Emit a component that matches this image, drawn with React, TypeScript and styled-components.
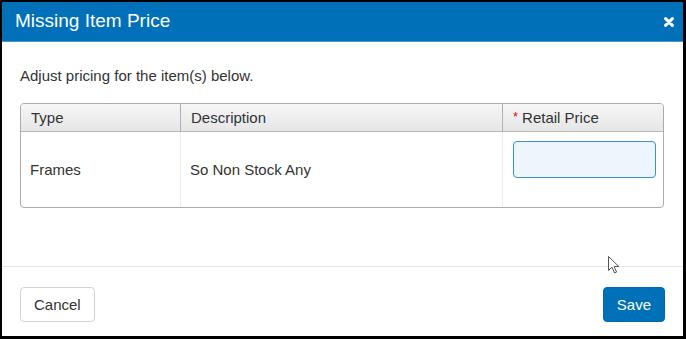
import styled, { createGlobalStyle } from "styled-components";

const GlobalStyle = createGlobalStyle`
  html, body {
    margin: 0;
    padding: 0;
    background: #000;
  }
  body {
    font-family: "Liberation Sans", Arial, sans-serif;
    color: #333;
  }
`;

const Frame = styled.div`
  width: 686px;
  height: 339px;
  box-sizing: border-box;
  padding: 2px 3px 3px 2px;
  background: #000;
`;

const Modal = styled.div`
  position: relative;
  height: 100%;
  background: #fff;
  display: flex;
  flex-direction: column;
`;

const Header = styled.div`
  height: 38px;
  background: #0070b8;
  border-bottom: 1px solid #4d98cf;
  display: flex;
  align-items: center;
  justify-content: space-between;
  padding: 0 9px 1px 13px;
`;

const Title = styled.h4`
  margin: 0;
  font-size: 19px;
  font-weight: normal;
  color: #fff;
`;

const Close = styled.button`
  border: 0;
  background: none;
  padding: 0;
  width: 10px;
  height: 10px;
  display: flex;
  cursor: pointer;
  margin-top: 1px;
`;

const Body = styled.div`
  flex: 1;
  padding: 24px 19px 0 18px;
`;

const Intro = styled.p`
  margin: 0 0 17px;
  font-size: 15px;
  line-height: 20px;
`;

const Grid = styled.div`
  display: grid;
  grid-template-columns: 160px 322px 1fr;
  border: 1px solid #ababab;
  border-radius: 4px;
  overflow: hidden;
`;

const HeadCell = styled.div<{ last?: boolean }>`
  height: 27px;
  display: flex;
  align-items: center;
  padding-left: 10px;
  font-size: 15px;
  background: linear-gradient(#f6f6f6, #e6e6e6);
  border-bottom: 1px solid #b8b8b8;
  border-right: ${(p) => (p.last ? "none" : "1px solid #b0b0b0")};
`;

const Cell = styled.div<{ last?: boolean }>`
  height: 75px;
  display: flex;
  align-items: ${(p) => (p.last ? "flex-start" : "center")};
  padding-left: 9px;
  font-size: 15px;
  border-right: ${(p) => (p.last ? "none" : "1px solid #ececec")};
`;

const Star = styled.span`
  color: #e01010;
  font-size: 13px;
  margin-right: 4px;
  position: relative;
  top: -1px;
`;

const PriceInput = styled.input`
  box-sizing: border-box;
  width: 143px;
  height: 37px;
  margin: 9px 0 0 1px;
  border: 1px solid #3d8fcf;
  border-radius: 4px;
  background: #edf5fd;
  outline: none;
  font-size: 15px;
`;

const Footer = styled.div`
  border-top: 1px solid #e5e5e5;
  padding: 20px 18px 14px 18px;
  display: flex;
  justify-content: space-between;
`;

const Button = styled.button<{ primary?: boolean }>`
  height: 35px;
  box-sizing: border-box;
  padding: 0 13px;
  font-family: "Liberation Sans", Arial, sans-serif;
  font-size: 15px;
  border-radius: 4px;
  border: 1px solid ${(p) => (p.primary ? "#0068ad" : "#d2d2d2")};
  background: ${(p) => (p.primary ? "#0070b8" : "#fff")};
  color: ${(p) => (p.primary ? "#fff" : "#333")};
  cursor: pointer;
`;

const Pointer = styled.svg`
  position: absolute;
  left: 606px;
  top: 254px;
`;

export default function App() {
  return (
    <>
      <GlobalStyle />
      <Frame>
        <Modal>
          <Header>
            <Title>Missing Item Price</Title>
            <Close aria-label="Close">
              <svg width="10" height="10" viewBox="0 0 10 10">
                <path d="M1.6 1.6L8.4 8.4M8.4 1.6L1.6 8.4" stroke="#fff" strokeWidth="3" strokeLinecap="round" />
              </svg>
            </Close>
          </Header>
          <Body>
            <Intro>Adjust pricing for the item(s) below.</Intro>
            <Grid>
              <HeadCell>Type</HeadCell>
              <HeadCell>Description</HeadCell>
              <HeadCell last>
                <Star>*</Star>Retail Price
              </HeadCell>
              <Cell>Frames</Cell>
              <Cell>So Non Stock Any</Cell>
              <Cell last>
                <PriceInput />
              </Cell>
            </Grid>
          </Body>
          <Footer>
            <Button>Cancel</Button>
            <Button primary>Save</Button>
          </Footer>
          <Pointer width="12" height="18" viewBox="0 0 12 18">
            <path
              d="M0.5 0.5V14.5L4 11.2L6.6 17L8.6 16.1L6.1 10.5H10.8Z"
              fill="#fff"
              stroke="#555"
              strokeWidth="1"
              strokeLinejoin="round"
            />
          </Pointer>
        </Modal>
      </Frame>
    </>
  );
}
